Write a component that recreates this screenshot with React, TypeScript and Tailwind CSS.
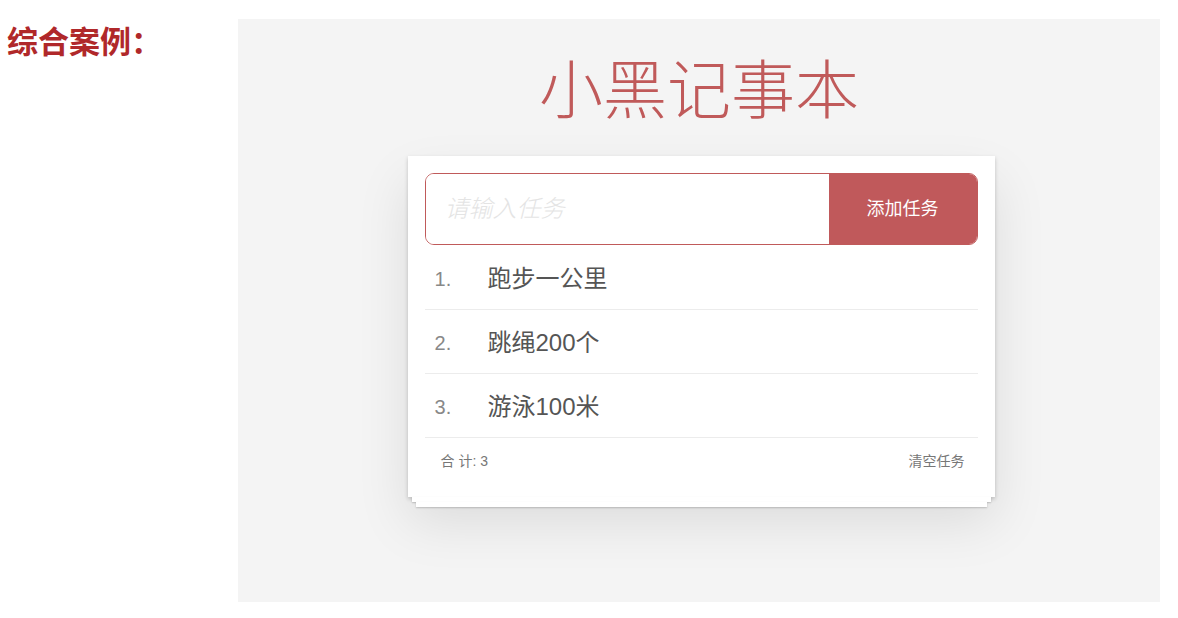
import React from "react";

const TASKS = ["跑步一公里", "跳绳200个", "游泳100米"];

const FONT = "font-['Liberation_Sans','Noto_Sans_CJK_SC',sans-serif]";

export default function App() {
  return (
    <div className={`flex min-h-[618px] w-[1178px] bg-white ${FONT}`}>
      <div className="w-[238px] shrink-0 pl-[7px] pt-[27px]">
        <h2 className="text-[31px] font-bold leading-none text-[#b0282a]">综合案例：</h2>
      </div>

      <section className="mt-[19px] h-[583px] w-[922px] shrink-0 bg-[#f4f4f4] pt-[40px]">
        <h1 className="text-center text-[64px] font-light leading-none text-[#c05a5a]">小黑记事本</h1>

        <div className="mx-auto mt-[33px] w-[587px] translate-x-[2px]">
          <div className="bg-white px-[17px] pt-[17px] shadow-[0_2px_4px_rgba(0,0,0,0.2),0_25px_50px_rgba(0,0,0,0.1)]">
            <div className="flex h-[72px] overflow-hidden rounded-[9px] border border-[#c05a5a]">
              <input
                className="min-w-0 flex-1 bg-white pl-[19px] text-[24px] font-light italic text-[#484848] outline-none placeholder:text-[#e4e4e4]"
                placeholder="请输入任务"
              />
              <button className="w-[148px] shrink-0 bg-[#c0595b] text-[18px] text-white">添加任务</button>
            </div>

            <ul>
              {TASKS.map((task, i) => (
                <li
                  key={task}
                  className={`flex items-center border-b border-[#ececec] pl-[10px] pt-[3px] text-[24px] text-[#555] ${i === 0 ? "h-[65px]" : "h-[64px]"}`}
                >
                  <span className="w-[53px] text-[20px] text-[#888]">{i + 1}.</span>
                  <span>{task}</span>
                </li>
              ))}
            </ul>

            <div className="flex h-[59px] items-start justify-between pl-[16px] pr-[13px] pt-[13px] text-[14px] text-[#777]">
              <span>合 计: {TASKS.length}</span>
              <span>清空任务</span>
            </div>
          </div>
          <div className="mx-[4px] h-[5px] bg-white shadow-[0_1px_2px_rgba(0,0,0,0.2)]" />
          <div className="mx-[8px] h-[5px] bg-white shadow-[0_1px_2px_rgba(0,0,0,0.2)]" />
        </div>
      </section>
    </div>
  );
}
